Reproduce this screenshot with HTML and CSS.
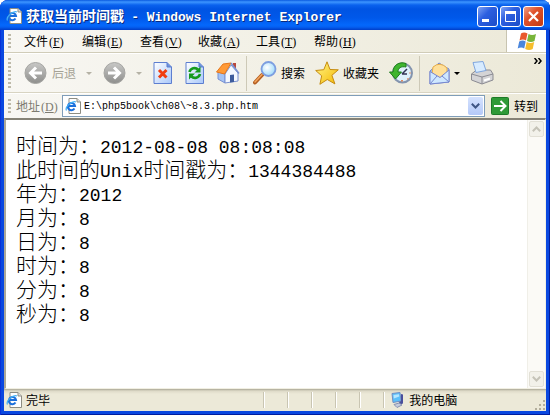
FILE: index.html
```html
<!DOCTYPE html>
<html lang="zh-CN">
<head>
    <meta charset="UTF-8">
    <meta name="viewport" content="width=device-width, initial-scale=1.0">
    <title>获取当前时间戳 - Windows Internet Explorer</title>
    <link rel="stylesheet" href="styles.css">
</head>
<body>

<svg class="defs" width="0" height="0" aria-hidden="true">
    <defs>
        <linearGradient id="grey" x1="0" y1="0" x2="0" y2="1">
            <stop offset="0" stop-color="#c8c8c6"/><stop offset="1" stop-color="#8e8e8c"/>
        </linearGradient>
        <linearGradient id="sheet" x1="0" y1="0" x2="1" y2="1">
            <stop offset="0" stop-color="#ffffff"/><stop offset="1" stop-color="#a9c8fa"/>
        </linearGradient>
        <linearGradient id="gold" x1="0" y1="0" x2="1" y2="1">
            <stop offset="0" stop-color="#fff68a"/><stop offset="1" stop-color="#f5b800"/>
        </linearGradient>
        <radialGradient id="glass" cx=".4" cy=".4" r=".6">
            <stop offset="0" stop-color="#ffffff"/><stop offset="1" stop-color="#a3dcfa"/>
        </radialGradient>
        <symbol id="ie-page" viewBox="0 0 16 16">
            <path d="M4 .5h8l3.500 3.500v11.500H4z" fill="#fff" stroke="#8d8d83"/>
            <path d="M12 .5V4h3.500" fill="#ddd" stroke="#8d8d83"/>
            <path d="M9.500 10.500a3.600 3.600 0 1 1 .5-2.500H3.500" fill="none" stroke="#1b6fdc" stroke-width="2"/>
            <path d="M1.500 12.500C-.5 9 7 2.500 11 4" fill="none" stroke="#43b0f4" stroke-width="1.200"/>
        </symbol>
    </defs>
</svg>

<div class="window">
    <header class="titlebar">
        <svg class="icon-small"><use href="#ie-page"/></svg>
        <h1>获取当前时间戳 <span>- Windows Internet Explorer</span></h1>
        <button class="win-btn" aria-label="最小化">
            <svg viewBox="0 0 19 19"><path d="M4 13.500h7" stroke="#fff" stroke-width="3"/></svg>
        </button>
        <button class="win-btn" aria-label="最大化">
            <svg viewBox="0 0 19 19"><path d="M4.500 5v9.500h10V5" fill="none" stroke="#fff"/><path d="M4 5.500h11" stroke="#fff" stroke-width="3"/></svg>
        </button>
        <button class="win-btn close" aria-label="关闭">
            <svg viewBox="0 0 19 19"><path d="M5 5l9 9M14 5l-9 9" stroke="#fff" stroke-width="2.200"/></svg>
        </button>
    </header>

    <nav class="menubar">
        <span class="grip"></span>
        <div class="menus">
            <button>文件<span class="key">(<u>F</u>)</span></button>
            <button>编辑<span class="key">(<u>E</u>)</span></button>
            <button>查看<span class="key">(<u>V</u>)</span></button>
            <button>收藏<span class="key">(<u>A</u>)</span></button>
            <button>工具<span class="key">(<u>T</u>)</span></button>
            <button>帮助<span class="key">(<u>H</u>)</span></button>
        </div>
        <div class="throbber">
            <svg viewBox="0 0 20 20" width="20" height="20">
                <path d="M4 2.500q3-2 6.500 0L9 9.500q-3-2-6.500 0z" fill="#e9592c"/>
                <path d="M11.500 3q3.500 2 7.500 0l-1.500 7q-3.500 2-7.500 0z" fill="#78b53a"/>
                <path d="M2.200 10.500q3.500-2 6.500 0l-1.500 7q-3-2-6.500 0z" fill="#4a86dc"/>
                <path d="M9.700 11q3.500 2 7.500 0l-1.500 7q-3.500 2-7.500 0z" fill="#f6bd2c"/>
            </svg>
        </div>
    </nav>

    <div class="toolbar">
        <span class="grip"></span>
        <button class="tool" disabled>
            <svg class="icon" viewBox="0 0 24 24"><circle cx="11.500" cy="12" r="10.500" fill="url(#grey)" stroke="#a5a5a2"/><path d="M18 12H7M12 6.500L6.500 12l5.500 5.500" fill="none" stroke="#fff" stroke-width="3"/></svg>
            后退
        </button>
        <button class="arrow" disabled aria-label="后退历史"></button>
        <button class="tool" disabled aria-label="前进">
            <svg class="icon" viewBox="0 0 24 24"><circle cx="12.500" cy="12" r="10.500" fill="url(#grey)" stroke="#a5a5a2"/><path d="M6 12h11M12 6.500l5.500 5.500-5.500 5.500" fill="none" stroke="#fff" stroke-width="3"/></svg>
        </button>
        <button class="arrow" disabled aria-label="前进历史"></button>
        <button class="tool" aria-label="停止">
            <svg class="icon page-icon" viewBox="0 0 22 24"><path d="M2 1.500h13l4.500 4.500v16.500H2z" fill="url(#sheet)" stroke="#5d7ed0"/><path d="M15 1.500V6h4.500" fill="#6f93dc" stroke="#5d7ed0"/><path d="M7 9l7.500 7.500M14.500 9L7 16.500" stroke="#f03c10" stroke-width="3"/></svg>
        </button>
        <button class="tool" aria-label="刷新">
            <svg class="icon page-icon" viewBox="0 0 22 24"><path d="M2 1.500h13l4.500 4.500v16.500H2z" fill="url(#sheet)" stroke="#5d7ed0"/><path d="M15 1.500V6h4.500" fill="#6f93dc" stroke="#5d7ed0"/><path d="M5.500 11c1-4 6-5 8.500-2.500M16 13c-1 4-6 5-8.500 2.500" fill="none" stroke="#159a1c" stroke-width="2.600"/><path d="M16.500 5.500v6h-6zM5 18.500v-6h6z" fill="#159a1c"/></svg>
        </button>
        <button class="tool" aria-label="主页">
            <svg class="icon" viewBox="0 0 24 24"><path d="M2 11l7 2v9l-7-4z" fill="#a5c4f5" stroke="#7890d0"/><path d="M9 13l6-9 7 8v8L9 22z" fill="#f4f8ff" stroke="#7890d0"/><path d="M17 2h3v6l-3-3z" fill="#b9473a"/><path d="M7 3l8-1-6.500 11L.5 11z" fill="#ff9a36" stroke="#e5771c"/><path d="M15 2l8 10.500" stroke="#7890d0" stroke-width="1.500"/><path d="M14 14l4-.5V21l-4 .5z" fill="#3e5c9c"/></svg>
        </button>
        <span class="sep"></span>
        <button class="tool">
            <svg class="icon" viewBox="0 0 24 24"><path d="M9 14l-7 7.500" stroke="#b45f22" stroke-width="4" stroke-linecap="round"/><path d="M9 13.500l-7 7.500" stroke="#f4a55c" stroke-width="1.500" stroke-linecap="round"/><circle cx="15.500" cy="8" r="7" fill="url(#glass)" stroke="#7d9ee0" stroke-width="1.800"/></svg>
            搜索
        </button>
        <button class="tool">
            <svg class="icon" viewBox="0 0 24 24"><path d="M12 .8l3 7.700 8.300.3-6.400 5.500 3 8.600-7.600-4.400-7.400 4.800 1.800-8.500L.7 9.500l8.100-.8z" fill="url(#gold)" stroke="#c58b10" stroke-linejoin="round"/></svg>
            收藏夹
        </button>
        <button class="tool" aria-label="历史">
            <svg class="icon" viewBox="0 0 24 24"><circle cx="13.500" cy="12" r="9.500" fill="#dff1fc" stroke="#8494ae" stroke-width="2"/><path d="M13 13l5-5M13 13h5" stroke="#335" stroke-width="1.500"/><path d="M13 19v1.500M20.500 12h1M18.500 17.500l.8.8" stroke="#e06a30" stroke-width="1.500"/><path d="M17 2.500C10 0 4 4.500 4 11H.5l6 7 6-7H9c0-4 3-6 8-5z" fill="#3fb52f" stroke="#1c7c1c"/></svg>
        </button>
        <span class="sep"></span>
        <button class="tool">
            <svg class="icon" viewBox="0 0 24 24"><path d="M4 10l9-8 10 6v13L4 23z" fill="#9dc4f8" stroke="#7687cf"/><path d="M7 6q7-6 14 1v5l-7 5-8-4z" fill="#ffe09a" stroke="#e9ad45"/><path d="M4 10.500l10 6L23 9v12L4 23z" fill="#cfe8ff" stroke="#7687cf"/><path d="M4 23l7-8M23 21l-7-6" stroke="#7687cf"/></svg>
            <span class="arrow" aria-label="邮件"></span>
        </button>
        <button class="tool" aria-label="打印">
            <svg class="icon" viewBox="0 0 24 24"><path d="M1.500 13l5-4h14l2.500 4v6l-11 4-10.500-4z" fill="#d4d4d6" stroke="#8b8b92"/><path d="M3 1.500l10-1 3 9-10 2z" fill="#d7ebff" stroke="#7fa6de"/><path d="M1.500 13l10.500 3 11-3M12 16v7" fill="none" stroke="#8b8b92"/><path d="M14 19.500l6-2" stroke="#fff" stroke-width="2"/></svg>
        </button>
        <button class="more" aria-label="更多">
            <svg viewBox="0 0 8 6" width="8" height="6"><path d="M.5 0l2.500 3-2.500 3M4.500 0L7 3 4.500 6" fill="none" stroke="#000" stroke-width="1.500"/></svg>
        </button>
    </div>

    <form class="addressbar">
        <span class="grip"></span>
        <label for="address">地址<span class="key">(<u>D</u>)</span></label>
        <div class="address">
            <svg class="icon-small"><use href="#ie-page"/></svg>
            <input type="text" id="address" value="E:\php5book\ch08\~8.3.php.htm">
            <button type="button" class="drop" aria-label="展开">
                <svg viewBox="0 0 9 6" width="9" height="6"><path d="M.8.8l3.700 3.700L8.200.8" fill="none" stroke="#3f5684" stroke-width="2"/></svg>
            </button>
        </div>
        <button type="button" class="go">
            <svg viewBox="0 0 18 18" width="18" height="18"><rect x=".5" y=".5" width="17" height="17" rx="1" fill="#2f9a37" stroke="#1d7a28"/><path d="M3 9h11M9.500 4l5 5-5 5" fill="none" stroke="#fff" stroke-width="2"/></svg>
            转到
        </button>
    </form>

    <div class="view">
        <main class="page">
            <p>时间为：<span>2012-08-08 08:08:08</span></p>
            <p>此时间的<span>Unix</span>时间戳为：<span>1344384488</span></p>
            <p>年为：<span>2012</span></p>
            <p>月为：<span>8</span></p>
            <p>日为：<span>8</span></p>
            <p>时为：<span>8</span></p>
            <p>分为：<span>8</span></p>
            <p>秒为：<span>8</span></p>
        </main>
        <div class="scrollbar">
            <button disabled aria-label="向上滚动">
                <svg viewBox="0 0 9 6" width="9" height="6"><path d="M.8 5.200l3.700-3.700 3.700 3.700" fill="none" stroke="#c5c3b8" stroke-width="2"/></svg>
            </button>
            <button disabled aria-label="向下滚动">
                <svg viewBox="0 0 9 6" width="9" height="6"><path d="M.8.8l3.700 3.700L8.200.8" fill="none" stroke="#c5c3b8" stroke-width="2"/></svg>
            </button>
        </div>
    </div>

    <footer class="statusbar">
        <div class="status">
            <svg class="icon-small"><use href="#ie-page"/></svg>
            完毕
        </div>
        <span class="pane"></span>
        <span class="pane"></span>
        <span class="pane"></span>
        <span class="pane"></span>
        <span class="pane"></span>
        <div class="zone">
            <svg class="icon-small" viewBox="0 0 16 16"><path d="M3 1.500l8-1 1 8.500-8 1.500z" fill="#5cc0fa" stroke="#6f8fc5"/><path d="M4.500 3l5.500-.8.300 2.300-5.500 2z" fill="#b5e7ff"/><path d="M12 2l2 .5v9l-3 1-1-2.500 2-1z" fill="#4a4f9c"/><path d="M5 12.500l5-1.500 3 2-5 2.500z" fill="#c5cbdc" stroke="#8790b0"/></svg>
            我的电脑
        </div>
        <svg class="resize" viewBox="0 0 12 12" width="12" height="12"><path d="M9 2h2M9 6h2M5 6h2M9 10h2M5 10h2M1 10h2" stroke="#b3ae9c" stroke-width="2"/></svg>
    </footer>
</div>

</body>
</html>
```
FILE: styles.css
```css
* {
    box-sizing: border-box;
}
body {
    margin: 0;
    background-color: #fff;
    font-family: "Noto Sans CJK SC", sans-serif;
    font-size: 12px;
    line-height: 16px;
    color: #000;
}
button {
    margin: 0;
    padding: 0;
    border: none;
    background: none;
    font: inherit;
    color: inherit;
}
svg {
    display: block;
    flex: none;
}
.defs {
    position: absolute;
}
.icon-small {
    width: 16px;
    height: 16px;
}
.key {
    padding-left: 1px;
    font-family: "Liberation Serif", serif;
    font-size: 12px;
}

/* Ventana */
.window {
    display: flex;
    flex-direction: column;
    height: 100vh;
    padding: 0 4px 4px;
    background-color: #0a48e0;
    border-radius: 8px 8px 0 0;
    box-shadow: inset 1px 0 #0831d9, inset -1px -1px #001ea0;
    overflow: hidden;
}
.titlebar {
    display: flex;
    flex: none;
    align-items: center;
    gap: 2px;
    height: 30px;
    margin: 0 -4px;
    padding: 2px 6px 0;
    background: linear-gradient(#0a5ae0 0, #3d95ff 2px, #0a62ee 5px, #0054e3 9px, #0058ea 18px, #0468fc 25px, #0560f2 27px, #003dc8 30px);
}
.titlebar h1 {
    flex: 1;
    margin: 0 0 0 2px;
    font-size: 14px;
    line-height: 20px;
    font-weight: bold;
    color: #fff;
    text-shadow: 1px 1px #0a2a7c;
    white-space: nowrap;
}
.titlebar h1 span {
    margin-left: 4px;
    font-family: "Liberation Mono", monospace;
    font-size: 13px;
}
.win-btn {
    width: 21px;
    height: 21px;
    border: 1px solid #fff;
    border-radius: 3px;
    background: linear-gradient(135deg, #7ea2f4, #2d5fe0 40%, #1c4cc8);
}
.win-btn.close {
    background: linear-gradient(135deg, #f0a088, #e0522c 40%, #c23a12);
}

/* Barras */
.grip {
    flex: none;
    width: 3px;
    height: 14px;
    margin-right: 3px;
    background: repeating-linear-gradient(#bdb9a8 0, #bdb9a8 2px, transparent 2px, transparent 4px);
}
.menubar {
    display: flex;
    flex: none;
    align-items: center;
    height: 23px;
    padding-left: 4px;
    background: linear-gradient(90deg, #f8f7f3, #ece9d8);
    border-bottom: 1px solid #d0ccb8;
}
.menus {
    display: flex;
    flex: 1;
    gap: 16px;
    padding-left: 10px;
}
.menus button {
    width: 42px;
    text-align: left;
    white-space: nowrap;
}
.throbber {
    display: flex;
    align-items: center;
    justify-content: center;
    width: 40px;
    height: 22px;
    background-color: #fff;
    border-left: 1px solid #c8c4b0;
}
.toolbar {
    display: flex;
    flex: none;
    align-items: center;
    gap: 10px;
    height: 40px;
    padding-left: 4px;
    background: linear-gradient(90deg, #f8f7f3, #ece9d8);
    border-top: 1px solid #fff;
    border-bottom: 1px solid #d8d4c2;
}
.toolbar .grip {
    height: 30px;
}
.tool {
    display: flex;
    align-items: center;
    gap: 4px;
    white-space: nowrap;
}
.tool:disabled {
    color: #a5a295;
}
.icon {
    width: 24px;
    height: 24px;
}
.page-icon {
    width: 22px;
}
.arrow {
    width: 0;
    height: 0;
    border: 3px solid transparent;
    border-top-color: #000;
    border-bottom: none;
}
.arrow:disabled {
    border-top-color: #b5b2a5;
}
.sep {
    width: 1px;
    height: 35px;
    margin: 0 -4px;
    background-color: #cdc9b7;
}
.more {
    align-self: flex-start;
    margin: 4px 4px 0 auto;
}
.addressbar {
    display: flex;
    flex: none;
    align-items: center;
    height: 25px;
    padding: 0 8px 0 4px;
    background: linear-gradient(90deg, #f8f7f3, #ece9d8);
    border-top: 1px solid #fff;
}
.addressbar label {
    width: 48px;
    padding-left: 2px;
    color: #7d7b70;
    white-space: nowrap;
}
.address {
    display: flex;
    flex: 1;
    align-items: center;
    height: 22px;
    padding: 0 1px 0 2px;
    background-color: #fff;
    border: 1px solid #7f9db9;
}
.address input {
    flex: 1;
    min-width: 0;
    padding: 0 0 0 3px;
    border: none;
    outline: none;
    background: none;
    font-family: "Liberation Mono", monospace;
    font-size: 10px;
    color: #000;
}
.drop {
    display: flex;
    align-items: center;
    justify-content: center;
    width: 15px;
    height: 18px;
    background: linear-gradient(#d5e2fe, #b4c9f8);
    border-radius: 2px;
}
.go {
    display: flex;
    align-items: center;
    gap: 5px;
    margin-left: 6px;
    white-space: nowrap;
}

/* Contenido de la página */
.view {
    display: flex;
    flex: 1;
    min-height: 0;
    background-color: #fff;
    border-top: 2px solid #858276;
    border-left: 2px solid #aca899;
    border-right: 1px solid #f1efe2;
    border-bottom: 1px solid #f1efe2;
}
.page {
    flex: 1;
    padding: 16px 10px;
    font-family: "Liberation Mono", "Noto Sans CJK SC", monospace;
    font-size: 21px;
    line-height: 24px;
    font-weight: 300;
}
.page p {
    height: 24px;
    margin: 0;
    white-space: nowrap;
}
.page span {
    font-size: 18px;
}
.scrollbar {
    display: flex;
    flex-direction: column;
    justify-content: space-between;
    width: 18px;
    padding: 1px;
    background-color: #fbfaf6;
    border-left: 1px solid #f0efe8;
}
.scrollbar button {
    display: flex;
    align-items: center;
    justify-content: center;
    height: 16px;
    background-color: #f2f1ea;
    border: 1px solid #e2e0d6;
    border-radius: 2px;
}

/* Barra de estado */
.statusbar {
    display: flex;
    flex: none;
    align-items: center;
    height: 22px;
    background: linear-gradient(#aaa796 0, #dedac8 2px, #ece9d8 5px, #ece9d8);
}
.status, .zone {
    display: flex;
    align-items: center;
    gap: 4px;
    padding-left: 2px;
}
.status {
    flex: 16;
}
.pane, .zone {
    height: 16px;
    border-left: 1px solid #c9c5b2;
    box-shadow: inset 1px 0 #fff;
}
.pane {
    width: 24px;
}
.zone {
    flex: 9;
    padding-left: 5px;
}
.resize {
    align-self: flex-end;
}
```
